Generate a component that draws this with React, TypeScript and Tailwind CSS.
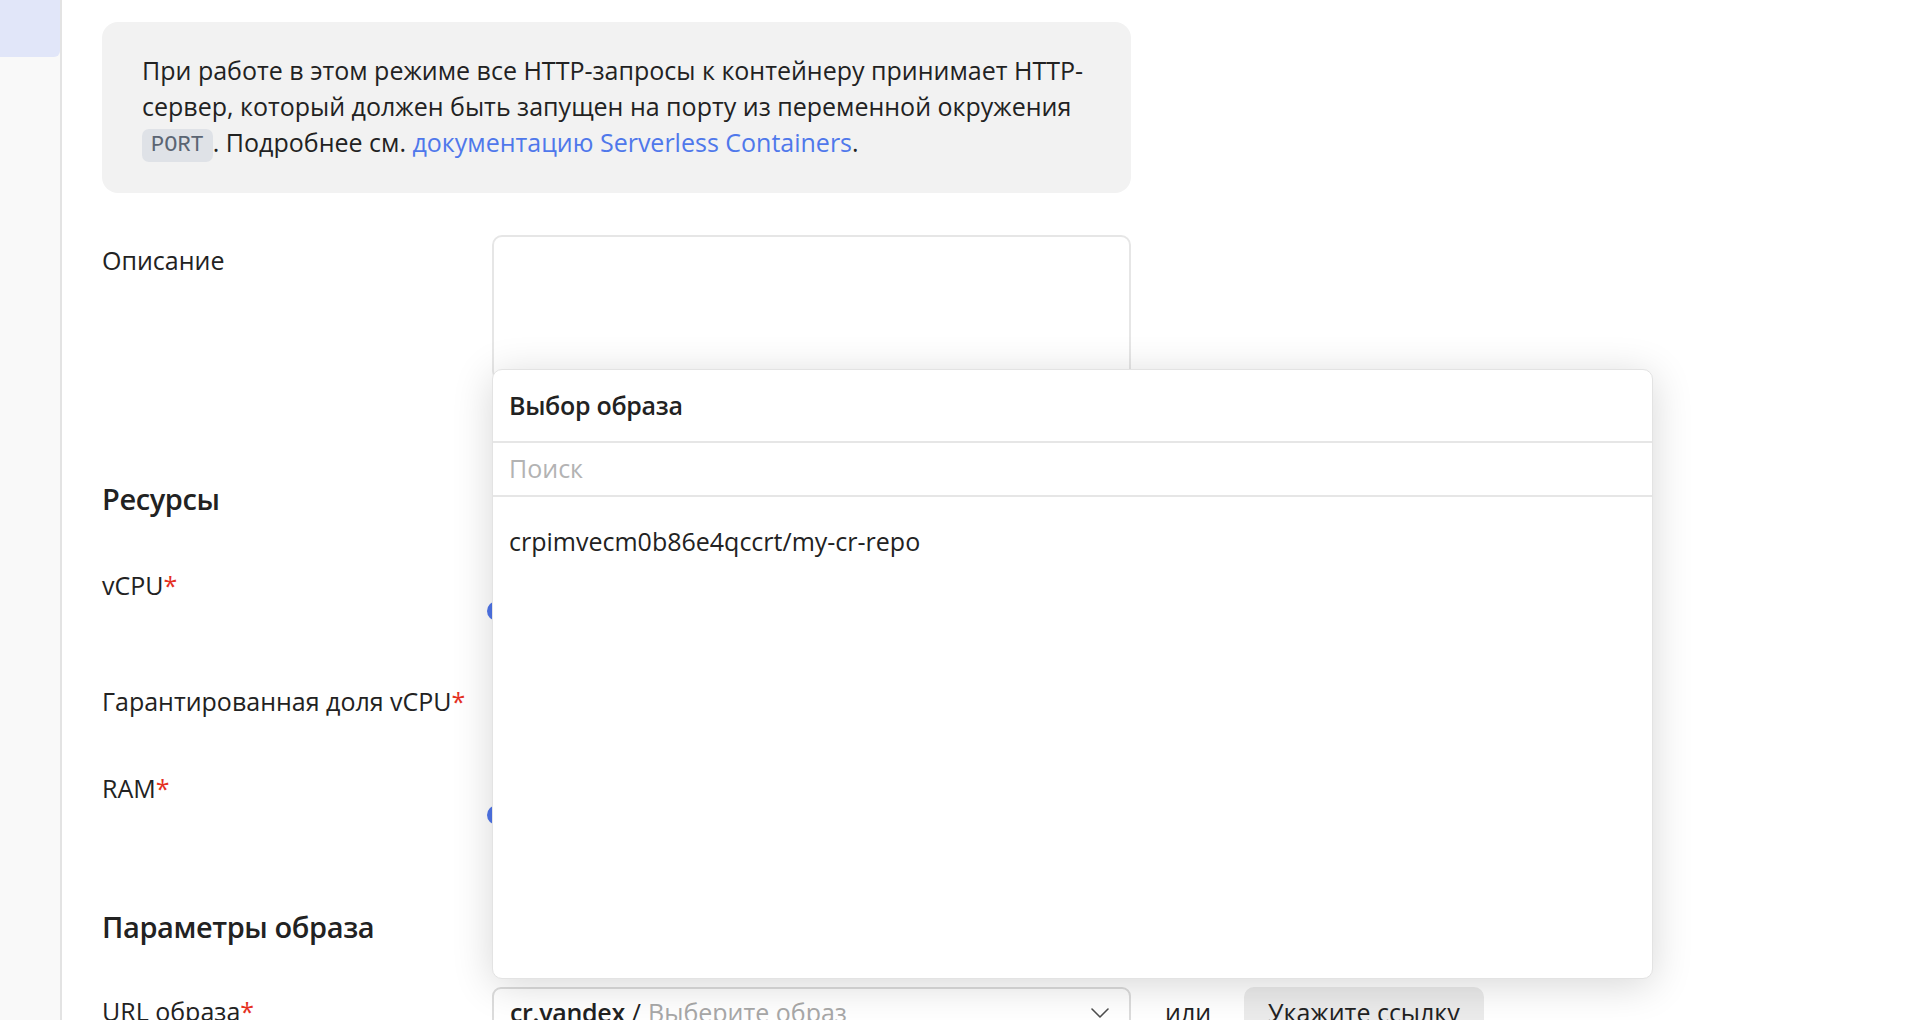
import React from "react";

const Req = () => <span className="text-[#e5301f]">*</span>;

function Chevron() {
  return (
    <svg width="18" height="10" viewBox="0 0 18 10" fill="none">
      <path d="M1 1l8 8 8-8" stroke="#4d4d4d" strokeWidth="1.6" strokeLinecap="round" strokeLinejoin="round" />
    </svg>
  );
}

function Slider() {
  return (
    <div className="flex items-center h-[20px]">
      <div className="w-[20px] h-[20px] rounded-full bg-[#4f75ea] -ml-[5px] shrink-0" />
      <div className="flex-1 h-[4px] bg-[#e5e5e5] rounded" />
    </div>
  );
}

export default function App() {
  return (
    <div
      className="w-[1928px] h-[1020px] bg-white flex overflow-hidden text-[#222222]"
      style={{ fontFamily: '"Open Sans", "Noto Sans", sans-serif' }}
    >
      {/* Sidebar */}
      <div className="w-[62px] shrink-0 h-full bg-[#f9f9f9] border-r-2 border-[#e3e3e3] flex flex-col">
        <div className="h-[57px] w-[60px] bg-[#e1e6f9] rounded-br-[6px]" />
      </div>

      {/* Main */}
      <div className="relative flex-1 pl-[40px] pt-[22px]">
        <div className="w-[1029px] flex flex-col">
          {/* Info box */}
          <div className="h-[171px] rounded-[16px] bg-[#f2f2f2] pl-[40px] pr-[30px] pt-[30px] text-[25px] leading-[36px] whitespace-nowrap">
            При работе в этом режиме все HTTP-запросы к контейнеру принимает HTTP-
            <br />
            сервер, который должен быть запущен на порту из переменной окружения
            <br />
            <code
              className="inline-block h-[33px] leading-[33px] align-middle px-[9px] rounded-[7px] bg-[#dfe2e7] text-[#5b6573] text-[22px]"
              style={{ fontFamily: '"Liberation Mono", monospace' }}
            >
              PORT
            </code>
            . Подробнее см.{" "}
            <span className="text-[#4f78eb]">документацию Serverless Containers</span>.
          </div>

          {/* Description */}
          <div className="flex mt-[42px]">
            <div className="w-[390px] shrink-0 pt-[7px] text-[25px] leading-[36px]">Описание</div>
            <div className="w-[639px] shrink-0 h-[146px] border-2 border-[#e6e6e6] rounded-[10px] bg-white" />
          </div>

          {/* Resources */}
          <div className="mt-[100px] text-[29px] leading-[36px] font-semibold tracking-[-0.4px]">Ресурсы</div>

          <div className="flex mt-[50px] h-[116px]">
            <div className="w-[390px] shrink-0 text-[25px] leading-[36px]">
              vCPU<Req />
            </div>
            <div className="w-[639px] shrink-0 pt-[34px]">
              <Slider />
            </div>
          </div>

          <div className="flex h-[87px]">
            <div className="w-[390px] shrink-0 text-[25px] leading-[36px] whitespace-nowrap">
              Гарантированная доля vCPU<Req />
            </div>
            <div className="w-[639px] shrink-0" />
          </div>

          <div className="flex h-[139px]">
            <div className="w-[390px] shrink-0 text-[25px] leading-[36px]">
              RAM<Req />
            </div>
            <div className="w-[639px] shrink-0 pt-[35px]">
              <Slider />
            </div>
          </div>

          {/* Image params */}
          <div className="text-[29px] leading-[36px] font-semibold tracking-[-0.4px]">Параметры образа</div>

          <div className="flex mt-[42px]">
            <div className="w-[390px] shrink-0 pt-[6px] text-[25px] leading-[36px] whitespace-nowrap">
              URL образа<Req />
            </div>
            <div className="flex items-center shrink-0">
              <div className="w-[639px] shrink-0 h-[52px] border-2 border-[#dcdcdc] rounded-[9px] flex items-center pl-[16px] pr-[20px] text-[25px] whitespace-nowrap">
                <span className="font-semibold text-[#222] tracking-[-0.3px]">cr.yandex</span>
                <span className="ml-[7px] text-[#222]">/</span>
                <span className="ml-[7px] text-[#a8a8a8] flex-1">Выберите образ</span>
                <Chevron />
              </div>
              <span className="ml-[34px] text-[25px] whitespace-nowrap">или</span>
              <div className="ml-[33px] shrink-0 h-[52px] px-[24px] rounded-[10px] bg-[#ebebeb] flex items-center text-[25px] whitespace-nowrap">
                Укажите ссылку
              </div>
            </div>
          </div>
        </div>

        {/* Popup */}
        <div className="absolute left-[430px] top-[369px] w-[1161px] h-[610px] bg-white border border-[#e3e3e3] rounded-[10px] shadow-[0_6px_40px_rgba(0,0,0,0.16)] flex flex-col">
          <div className="h-[73px] border-b-2 border-[#e6e6e6] flex items-center px-[16px] text-[25px] font-semibold tracking-[-0.3px]">
            Выбор образа
          </div>
          <div className="h-[54px] border-b-2 border-[#e6e6e6] flex items-center px-[16px] text-[25px] text-[#b3b3b3]">
            Поиск
          </div>
          <div className="pt-[26px] px-[16px] text-[25px] leading-[36px]">
            crpimvecm0b86e4qccrt/my-cr-repo
          </div>
        </div>
      </div>
    </div>
  );
}
